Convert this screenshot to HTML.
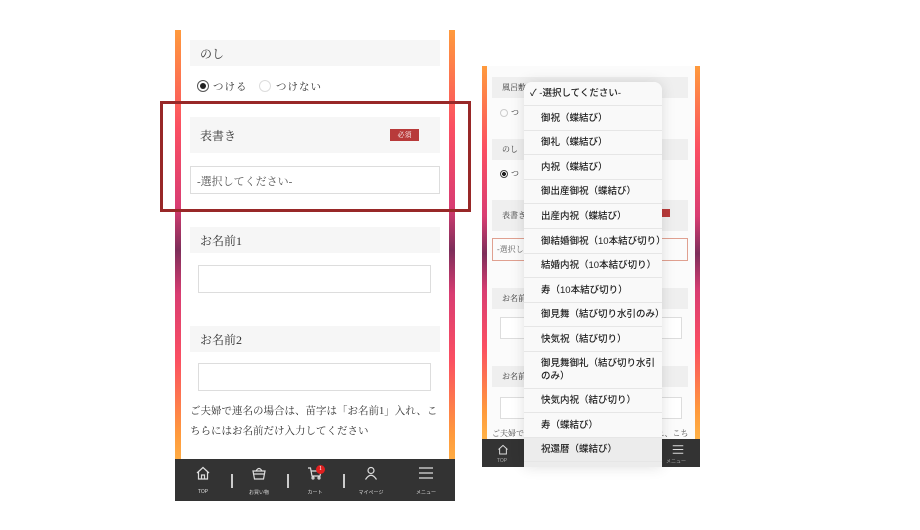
<!DOCTYPE html>
<html><head><meta charset="utf-8"><style>
*{margin:0;padding:0;box-sizing:border-box}
body{width:920px;height:530px;background:#fff;position:relative;overflow:hidden;font-family:"Liberation Serif","Noto Serif CJK SC",serif;color:#333}
.a{position:absolute}
.grad{background:linear-gradient(to bottom,#ff9a3c 0%,#fb4f62 22%,#d93d72 40%,#7d2e5a 50%,#d93d72 60%,#fb4f62 75%,#ff9a3c 92%,#ffb347 100%)}
.hd{background:#f6f6f6;font-size:12px;padding-left:10px;display:flex;align-items:center}
.in{border:1px solid #ddd;background:#fff}
.row{position:absolute;left:524px;width:138px;background:#f9f9f9;border-bottom:1px solid #e6e6e6;font-size:9.5px;font-family:"Liberation Sans","Noto Sans CJK JP",sans-serif;padding-left:17px;display:flex;align-items:center;color:#222;line-height:13px;font-weight:500}
.ic{position:absolute;color:#ddd;font-size:5px;text-align:center;font-family:"Liberation Sans","Noto Sans CJK JP",sans-serif}
.sep{position:absolute;width:1.5px;height:14px;background:#ccc;top:474px}
</style></head><body>
<!-- left phone -->
<div class="a grad" style="left:175px;top:30px;width:6px;height:440px"></div>
<div class="a grad" style="left:449px;top:30px;width:6px;height:440px"></div>
<div class="a hd" style="left:190px;top:40px;width:250px;height:26px">のし</div>
<div class="a" style="left:197px;top:80px;width:12px;height:12px;border:1px solid #555;border-radius:50%"><div style="margin:2px;width:6px;height:6px;border-radius:50%;background:#222"></div></div>
<div class="a" style="left:213px;top:79px;font-size:10.5px;letter-spacing:1px">つける</div>
<div class="a" style="left:259px;top:80px;width:12px;height:12px;border:1px solid #ddd;border-radius:50%"></div>
<div class="a" style="left:276px;top:79px;font-size:10.5px;letter-spacing:1px">つけない</div>
<div class="a hd" style="left:190px;top:117px;width:250px;height:36px">表書き</div>
<div class="a" style="left:390px;top:129px;width:29px;height:12px;background:#b83a3a;color:#fff;font-size:7px;text-align:center;line-height:12px">必須</div>
<div class="a in" style="left:190px;top:166px;width:250px;height:28px;font-size:11px;padding:6px 6px;color:#555">-選択してください-</div>
<div class="a" style="left:160px;top:101px;width:311px;height:111px;border:3px solid #982828"></div>
<div class="a hd" style="left:190px;top:227px;width:250px;height:26px">お名前1</div>
<div class="a in" style="left:198px;top:265px;width:233px;height:28px"></div>
<div class="a hd" style="left:190px;top:326px;width:250px;height:26px">お名前2</div>
<div class="a in" style="left:198px;top:363px;width:233px;height:28px"></div>
<div class="a" style="left:190px;top:402px;width:270px;font-size:10.5px;line-height:20px;letter-spacing:0;white-space:nowrap;color:#333">ご夫婦で連名の場合は、苗字は「お名前1」入れ、こ<br>ちらにはお名前だけ入力してください</div>
<div class="a" style="left:175px;top:459px;width:280px;height:42px;background:#333"></div>
<svg class="a" style="left:195px;top:466px" width="16" height="14" viewBox="0 0 16 14" fill="none" stroke="#ddd" stroke-width="1.2"><path d="M2 7L8 1.5 14 7M3.5 6V13H12.5V6M6.5 13V9H9.5V13"/></svg>
<svg class="a" style="left:251px;top:466px" width="16" height="14" viewBox="0 0 16 14" fill="none" stroke="#ddd" stroke-width="1.2"><path d="M5 5Q8 0 11 5M2 5H14L12.5 13H3.5ZM3 8H13"/></svg>
<svg class="a" style="left:307px;top:466px" width="16" height="14" viewBox="0 0 16 14" fill="none" stroke="#ddd" stroke-width="1.2"><path d="M1 2H3.5L5 10H13L14 5H4"/><circle cx="6" cy="12" r="1"/><circle cx="12" cy="12" r="1"/></svg>
<div class="a" style="left:316px;top:465px;width:9px;height:9px;border-radius:50%;background:#e02020;color:#fff;font-size:6px;text-align:center;line-height:9px">1</div>
<svg class="a" style="left:363px;top:466px" width="16" height="14" viewBox="0 0 16 14" fill="none" stroke="#ddd" stroke-width="1.2"><circle cx="8" cy="4.5" r="3"/><path d="M2.5 13.5Q8 5 13.5 13.5"/></svg>
<svg class="a" style="left:418px;top:466px" width="16" height="14" viewBox="0 0 16 14" fill="none" stroke="#ddd" stroke-width="1.3"><path d="M1 2H15M1 7H15M1 12H15"/></svg>
<div class="ic" style="left:188px;top:489px;width:30px">TOP</div>
<div class="ic" style="left:244px;top:489px;width:30px">お買い物</div>
<div class="ic" style="left:300px;top:489px;width:30px">カート</div>
<div class="ic" style="left:356px;top:489px;width:30px">マイページ</div>
<div class="ic" style="left:411px;top:489px;width:30px">メニュー</div>
<div class="sep" style="left:231px"></div><div class="sep" style="left:287px"></div><div class="sep" style="left:343px"></div>

<!-- right phone -->
<div class="a grad" style="left:482px;top:66px;width:5px;height:375px"></div>
<div class="a grad" style="left:695px;top:66px;width:5px;height:375px"></div>
<div class="a" style="left:487px;top:66px;width:208px;height:373px;background:#fbfbfb"></div>
<div class="a hd" style="left:492px;top:77px;width:196px;height:21px;font-size:8px;background:#efefef">風呂敷</div>
<div class="a" style="left:500px;top:109px;width:8px;height:8px;border:1px solid #ccc;border-radius:50%"></div>
<div class="a" style="left:511px;top:107px;font-size:8px">つ</div>
<div class="a hd" style="left:492px;top:139px;width:196px;height:21px;font-size:8px;background:#efefef">のし</div>
<div class="a" style="left:500px;top:170px;width:8px;height:8px;border:1px solid #444;border-radius:50%;background:radial-gradient(#222 45%,#fff 50%)"></div>
<div class="a" style="left:511px;top:168px;font-size:8px">つ</div>
<div class="a hd" style="left:492px;top:200px;width:196px;height:31px;font-size:8px;background:#efefef">表書き</div>
<div class="a" style="left:658px;top:209px;width:12px;height:8px;background:#b83a3a"></div>
<div class="a" style="left:492px;top:238px;width:196px;height:23px;border:1px solid #e0a090;font-size:8px;padding:5px 4px;color:#666">-選択してください-</div>
<div class="a hd" style="left:492px;top:288px;width:196px;height:21px;font-size:8px;background:#efefef">お名前</div>
<div class="a in" style="left:500px;top:317px;width:182px;height:22px"></div>
<div class="a hd" style="left:492px;top:366px;width:196px;height:21px;font-size:8px;background:#efefef">お名前</div>
<div class="a in" style="left:500px;top:397px;width:182px;height:22px"></div>
<div class="a" style="left:492px;top:427px;width:200px;font-size:8px;color:#555;line-height:13px">ご夫婦で連名の場合は、苗字は「お名前1」入れ、こちらには</div>
<div class="a" style="left:482px;top:439px;width:218px;height:28px;background:#333"></div>
<div class="ic" style="left:490px;top:458px;width:24px;color:#aaa">TOP</div>
<div class="ic" style="left:664px;top:458px;width:24px;color:#aaa">メニュー</div>
<svg class="a" style="left:497px;top:444px" width="12" height="11" viewBox="0 0 16 14" fill="none" stroke="#ddd" stroke-width="1.3"><path d="M2 7L8 1.5 14 7M3.5 6V13H12.5V6"/></svg>
<svg class="a" style="left:672px;top:444px" width="12" height="11" viewBox="0 0 16 14" fill="none" stroke="#ddd" stroke-width="1.4"><path d="M1 2H15M1 7H15M1 12H15"/></svg>

<div class="a" style="left:524px;top:82px;width:138px;height:385px;background:#f9f9f9;border-radius:8px 8px 0 0;box-shadow:0 0 14px rgba(0,0,0,0.12)"></div>
<div class="row" style="top:82px;height:24px;padding-left:6px;border-radius:8px 8px 0 0">✓&nbsp;-選択してください-</div>
<div class="row" style="top:106px;height:25px">御祝（蝶結び）</div>
<div class="row" style="top:131px;height:24px">御礼（蝶結び）</div>
<div class="row" style="top:155px;height:25px">内祝（蝶結び）</div>
<div class="row" style="top:180px;height:24px">御出産御祝（蝶結び）</div>
<div class="row" style="top:204px;height:25px">出産内祝（蝶結び）</div>
<div class="row" style="top:229px;height:25px">御結婚御祝（10本結び切り）</div>
<div class="row" style="top:254px;height:24px">結婚内祝（10本結び切り）</div>
<div class="row" style="top:278px;height:25px">寿（10本結び切り）</div>
<div class="row" style="top:303px;height:24px">御見舞（結び切り水引のみ）</div>
<div class="row" style="top:327px;height:25px">快気祝（結び切り）</div>
<div class="row" style="top:352px;height:37px">御見舞御礼（結び切り水引<br>のみ）</div>
<div class="row" style="top:389px;height:24px">快気内祝（結び切り）</div>
<div class="row" style="top:413px;height:25px">寿（蝶結び）</div>
<div class="row" style="top:438px;height:24px;background:#ececec">祝還暦（蝶結び）</div>
<div class="row" style="top:462px;height:5px;background:#ececec;border:0"></div>
</body></html>
